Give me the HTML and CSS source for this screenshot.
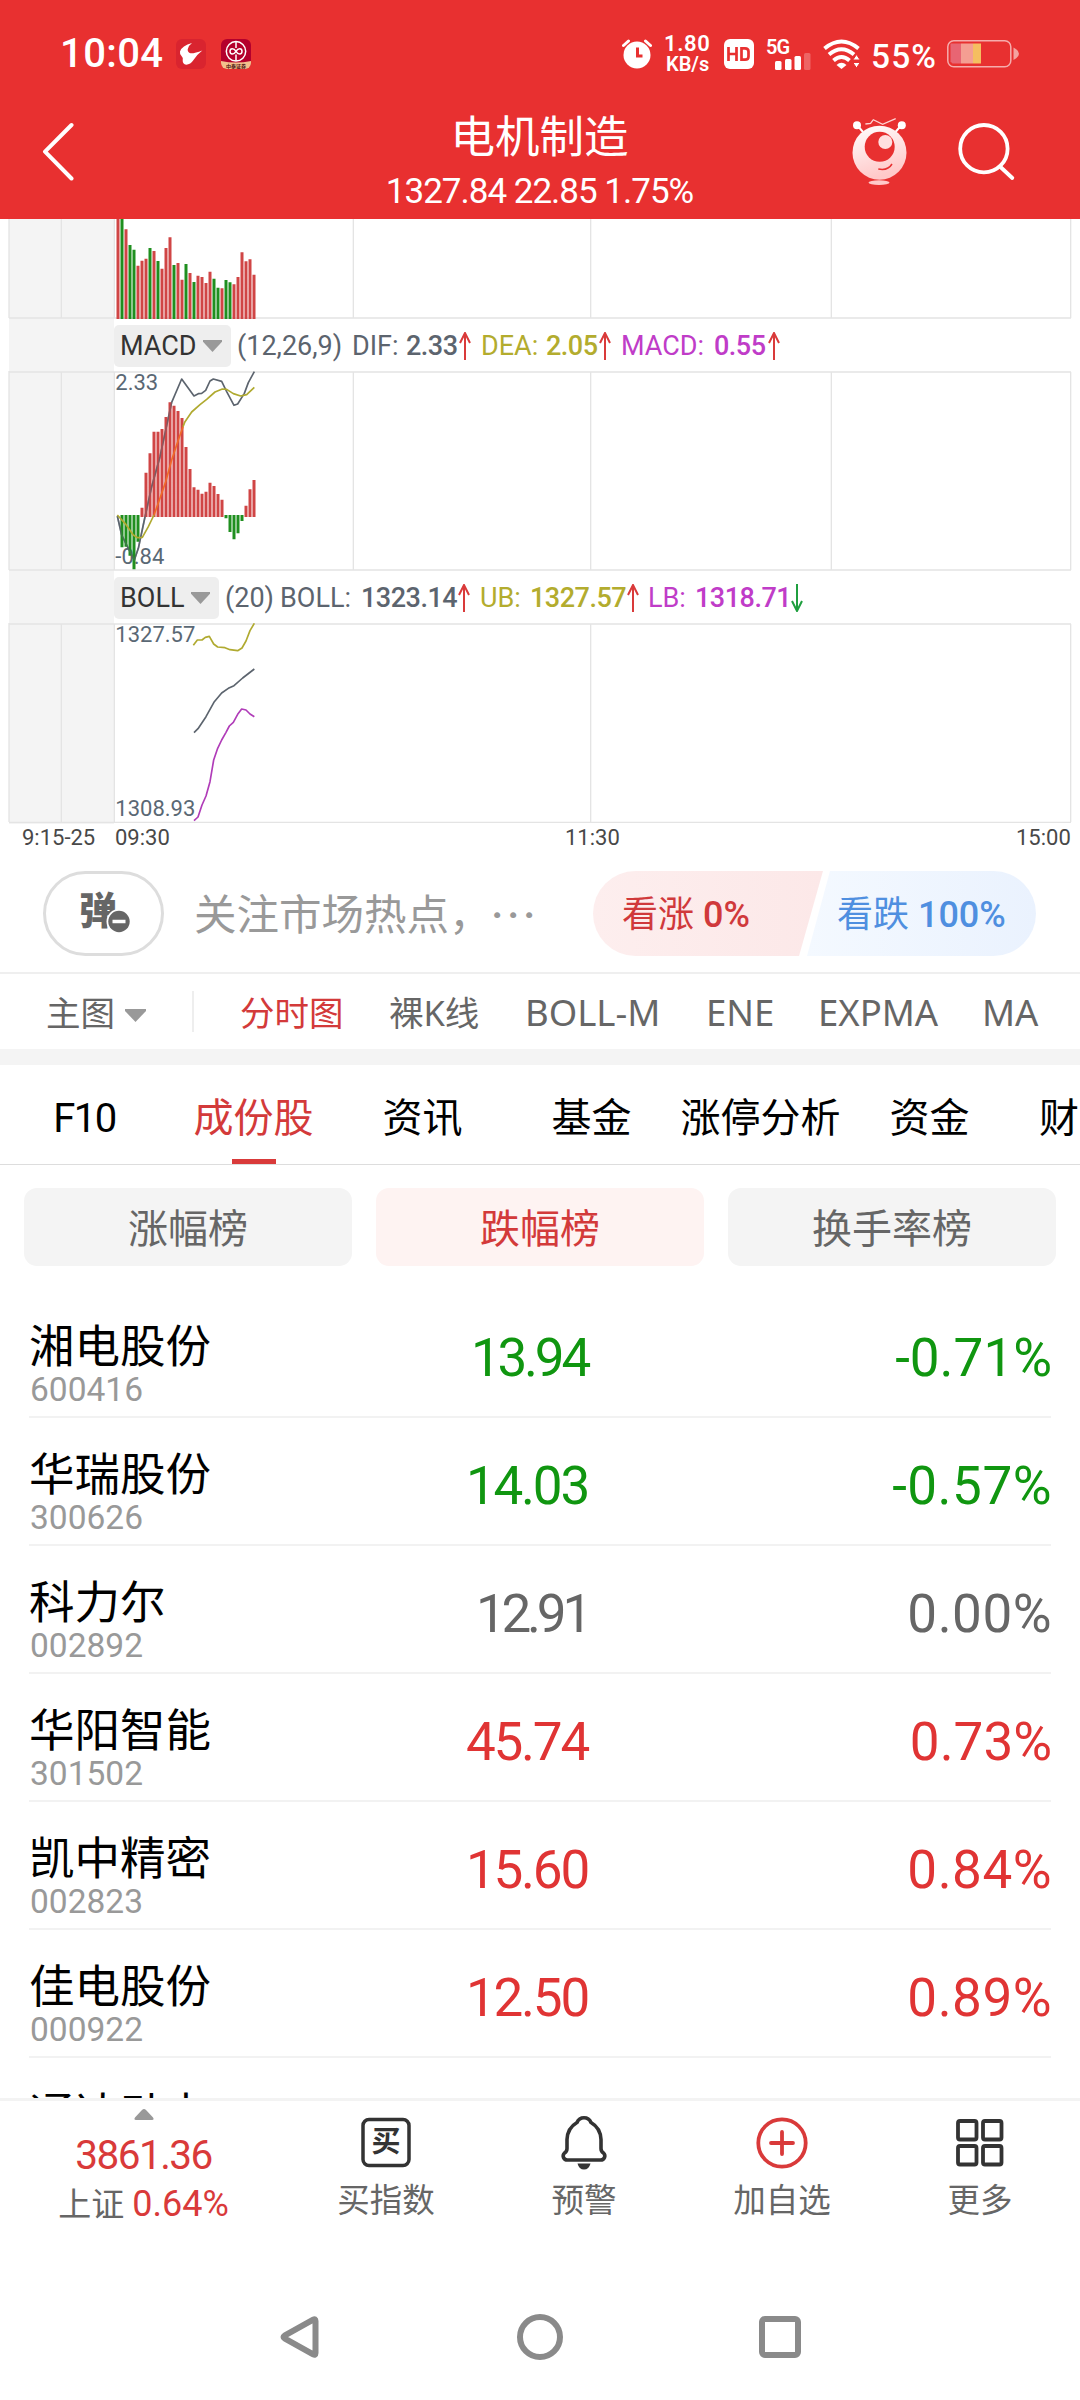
FILE: index.html
```html
<!DOCTYPE html>
<html lang="zh-CN">
<head>
<meta charset="utf-8">
<title>电机制造</title>
<link rel="stylesheet" href="styles.css">
</head>
<body>
<div class="screen">
  <header class="header">
    <div class="status">
      <span class="clock">10:04</span>
      <svg class="app-a" width="30" height="30" viewBox="0 0 30 30"><rect width="30" height="30" rx="6" fill="#d9242f"/><path d="M16 4Q6 6.500 4 12.500q-.5 2.500 1.500 4.500 2 1.500 1.200 4.500-.2 3.500 3.500 4.200 4.300-.2 7.300-4.700Q21 15.500 26.300 11.500 19 14.500 14.500 14.300q-3-1-2.800-4Q12.500 6.500 16 4z" fill="#fff"/></svg>
      <svg class="app-b" width="30" height="30" viewBox="0 0 30 30"><defs><clipPath id="rc"><rect width="30" height="30" rx="6"/></clipPath></defs><g clip-path="url(#rc)"><rect width="30" height="30" fill="#b4002c"/><path d="M0 22q15 3 30 0v8H0z" fill="#f3c08c"/></g><g fill="none" stroke="#fff" stroke-width="1.500"><circle cx="15" cy="12.300" r="9.700"/><path d="M15 2.500v6.500M15 15.500v6.500M15 12.300c-2-3.500-6-3.500-6 0s4 3.500 6 0 6-3.500 6 0-4 3.500-6 0"/></g><text x="15" y="28.700" font-size="5" font-weight="700" text-anchor="middle" fill="#4a1010">中泰证券</text></svg>
      <svg class="alarm" width="30" height="30" viewBox="0 0 30 30"><circle cx="15" cy="16" r="13.500" fill="#fff"/><path d="M15.500 8.500v8.500h5" fill="none" stroke="#e83030" stroke-width="3"/><path d="M1.500 6.500l5-4.500M28.500 6.500l-5-4.500" stroke="#fff" stroke-width="3" stroke-linecap="round"/></svg>
      <span class="speed"><b>1.80</b><b class="unit">KB/s</b></span>
      <svg class="hd" width="30" height="30" viewBox="0 0 30 30"><rect width="30" height="30" rx="6" fill="#fff"/><path d="M4.500 8v14M12.500 8v14M4.500 15h8M17.500 9.300v11.400h3.500q3.500 0 3.500-3.200v-5q0-3.200-3.500-3.200z" fill="none" stroke="#e83030" stroke-width="2.700"/></svg>
      <span class="signal"><b>5G</b><svg width="36" height="18" viewBox="0 0 36 18" fill="#fff"><rect y="9" width="6.500" height="9" rx="1.500"/><rect x="10" y="7" width="6.500" height="11" rx="1.500"/><rect x="19.500" y="4" width="6.500" height="14" rx="1.500"/><rect x="29" y="1" width="6.500" height="17" rx="1.500" opacity=".25"/></svg></span>
      <svg class="wifi" width="38" height="30" viewBox="0 0 38 30"><g fill="none" stroke="#fff" stroke-width="4"><path d="M1.500 9.500Q18.500-4.500 35.500 9.500"/><path d="M6 15.500Q18.500 5 31 15.500"/><path d="M10.500 21.500Q18.500 14.500 26.500 21.500"/></g><path d="M13.500 26Q18.500 21.500 23.500 26L18.500 30z" fill="#fff"/><path d="M33.500 15.500l3.700 5.500h-7.400zM33.500 29l3.700-5.500h-7.400z" fill="#fff" stroke="#e83030" stroke-width="1"/></svg>
      <span class="charge">55%</span>
      <svg class="battery" width="73" height="28" viewBox="0 0 73 28"><rect x=".8" y=".8" width="63" height="26" rx="6" fill="none" stroke="#fff" stroke-opacity=".6" stroke-width="1.500"/><path d="M3.500 3.500h10.500v20H5.500l-2-2z" fill="#e86573"/><path d="M14 3.500h12v20H14z" fill="#f49e92"/><path d="M26 3.500h8v20h-8z" fill="#f5be60"/><path d="M66.500 7.500q5.500 3 5.500 6.300t-5.500 6.200z" fill="#f4a3a0"/></svg>
    </div>
    <div class="title-bar">
      <svg class="back" width="34" height="60" viewBox="0 0 34 60"><path d="M30.500 4L4 30.600l26.500 26.900" fill="none" stroke="#fff" stroke-width="4" stroke-linecap="round" stroke-linejoin="round"/></svg>
      <div class="titles">
        <h1>电机制造</h1>
        <p>1327.84 22.85 1.75%</p>
      </div>
      <svg class="robot" width="60" height="70" viewBox="850 117 60 70"><defs><linearGradient id="rg" x1="0" y1="0" x2=".3" y2="1"><stop offset="0" stop-color="#fff"/><stop offset="1" stop-color="#ffc9c9"/></linearGradient></defs><path d="M857 125l6 7M901.500 125l-6 7" stroke="#fff" stroke-width="2"/><circle cx="857" cy="125.300" r="4" fill="#fff"/><circle cx="901.800" cy="125.300" r="4" fill="#fff"/><path d="M865.400 124l5.200-.7 2.700-3.600 9.300 4.600 13.100-5.600" fill="none" stroke="#ffd4d4" stroke-width="1.300"/><circle cx="879.500" cy="152.700" r="27" fill="url(#rg)"/><circle cx="879.700" cy="146.800" r="15" fill="#e83030"/><circle cx="885.300" cy="142" r="7" fill="#ffe0e0"/><path d="M878.300 169q9.500 2 13.700-5" fill="none" stroke="#e83030" stroke-width="1.500"/><ellipse cx="879" cy="182.600" rx="10.500" ry="2.300" fill="#ffc9c9"/></svg>
      <svg class="search" width="60" height="60" viewBox="957 121 60 60"><g fill="none" stroke="#fff" stroke-width="3.800" stroke-linecap="round"><circle cx="983.900" cy="148.700" r="23.700"/><path d="M1000.500 167l11.800 11"/></g></svg>
    </div>
  </header>

  <section class="charts">
    <svg class="plot" width="1080" height="100" viewBox="0 27 3240 300">
      <path class="shade" d="M27 27h315v300H27z"/>
      <path class="grid" d="M27 27v297M184 27v297M343 27v297M1060 27v297M1772 27v297M2494 27v297M3212 27v297M27 324h3186"/>
      <path class="bar-up" d="M354 327V27M378 327V58M414 327V167M426 327V152M438 327V146M462 327V123M486 327V176M498 327V114M510 327V82M534 327V159M546 327V209M570 327V189M594 327V197M606 327V201M618 327V219M630 327V185M666 327V235M702 327V223M714 327V201M726 327V127M738 327V154M750 327V148M762 327V194"/>
      <path class="bar-down" d="M366 327V27M390 327V105M402 327V119M450 327V114M474 327V153M522 327V165M558 327V162M582 327V216M642 327V206M654 327V233M678 327V210M690 327V217"/>
    </svg>
    <div class="legend legend-macd">
      <span class="chip">MACD<i class="caret"></i></span>
      <span>(12,26,9)</span><span>DIF:</span><span class="value">2.33</span>
      <svg class="arrow" viewBox="0 0 12 28"><path d="M6 28V2M1 11L6 1l5 10"/></svg>
      <span class="olive">DEA:</span><span class="olive value">2.05</span>
      <svg class="arrow" viewBox="0 0 12 28"><path d="M6 28V2M1 11L6 1l5 10"/></svg>
      <span class="violet">MACD:</span><span class="violet value">0.55</span>
      <svg class="arrow" viewBox="0 0 12 28"><path d="M6 28V2M1 11L6 1l5 10"/></svg>
    </div>
    <svg class="plot" width="1080" height="200" viewBox="0 483 3240 600">
      <path class="shade" d="M27 483h315v600H27z"/>
      <path class="grid" d="M27 483v597M184 486v594M343 486v594M1060 486v594M1772 486v594M2494 486v594M3212 486v594M27 486h3186M27 1080h3186"/>
      <text x="346" y="540">2.33</text><text x="346" y="1061">-0.84</text>
      <path class="line slate" d="M352 918L365 975L385 1015L403 1050L415 1015L433 930L455 830L480 740L515 577L545 507L582 558L595 551L605 550L617 541L630 513L640 507L665 514L680 545L702 586L713 582L733 550L745 518L763 485"/>
      <path class="bar-up" d="M426 921V893M438 921V788M450 921V730M462 921V665M474 921V665M486 921V657M498 921V621M510 921V577M522 921V587M534 921V603M546 921V624M558 921V711M570 921V777M582 921V832M594 921V839M606 921V851M618 921V845M630 921V818M642 921V828M654 921V852M666 921V869M738 921V887M750 921V838M762 921V810"/>
      <path class="bar-down" d="M366 915V1012M378 915V1010M390 915V1037M402 915V1078M414 915V995M678 915V925M690 915V966M702 915V988M714 915V970M726 915V933"/>
      <path class="line slate faint" d="M352 918L365 975L385 1015L403 1050L415 1015L433 930L455 830L480 740L515 577"/>
      <path class="line gold" d="M352 915L375 940L400 975L413 983L427 982L445 950L462 915"/>
      <path class="line amber" d="M462 915L480 865L497 815L515 750L535 690L549 650"/>
      <path class="line gold" d="M549 650L555 635L575 606L600 584L620 568L645 546L667 537L680 538L700 551L722 558L740 554L763 532"/>
    </svg>
    <div class="legend legend-boll">
      <span class="chip">BOLL<i class="caret"></i></span>
      <span>(20)</span><span>BOLL:</span><span class="value">1323.14</span>
      <svg class="arrow" viewBox="0 0 12 28"><path d="M6 28V2M1 11L6 1l5 10"/></svg>
      <span class="olive">UB:</span><span class="olive value">1327.57</span>
      <svg class="arrow" viewBox="0 0 12 28"><path d="M6 28V2M1 11L6 1l5 10"/></svg>
      <span class="violet">LB:</span><span class="violet value">1318.71</span>
      <svg class="arrow fall" viewBox="0 0 12 28"><path d="M6 0v26M1 17l5 10 5-10"/></svg>
    </div>
    <svg class="plot" width="1080" height="201" viewBox="0 189 3240 603">
      <path class="shade" d="M27 189h315v603H27z"/>
      <path class="grid" d="M27 189v597M184 192v594M343 192v594M1772 192v594M3212 192v594M27 192h3186M27 787h3186"/>
      <text x="346" y="246">1327.57</text><text x="346" y="768">1308.93</text>
      <path class="line gold" d="M580 256L592 240L606 240L616 232L628 229L641 252L653 261L675 263L690 269L713 272L726 264L738 243L750 212L763 190"/>
      <path class="line slate" d="M582 518L594 506L606 488L618 470L643 425L665 399L685 385L702 377L728 354L763 327"/>
      <path class="line purple" d="M582 782L594 771L606 735L618 708L630 665L641 600L653 565L665 540L678 517L688 498L700 487L713 463L725 447L738 450L750 462L763 470"/>
    </svg>
    <div class="axis"><span>9:15-25</span><span>09:30</span><span>11:30</span><span>15:00</span></div>
  </section>

  <section class="comment">
    <div class="danmu"><svg width="52" height="46" viewBox="0 0 52 46"><text x="0" y="34" class="danmu-text">弹</text><circle cx="40" cy="31.500" r="12.500" fill="#fff"/><circle cx="40" cy="31.500" r="10.700" fill="#666"/><path d="M33.500 31.500h13" stroke="#fff" stroke-width="3.500"/></svg></div>
    <div class="hint">关注市场热点，<span>···</span></div>
    <div class="vote">
      <div class="bull">看涨 <em>0%</em></div>
      <div class="bear">看跌 <em>100%</em></div>
    </div>
  </section>

  <nav class="views">
    <span class="main-view">主图<i class="caret"></i></span>
    <span class="active">分时图</span><span>裸K线</span><span class="latin">BOLL-M</span><span class="latin">ENE</span><span class="latin">EXPMA</span><span class="latin">MA</span>
  </nav>

  <nav class="tabs">
    <span class="f10">F10</span><span class="active">成份股</span><span>资讯</span><span>基金</span><span>涨停分析</span><span>资金</span><span class="cut">财</span>
  </nav>

  <div class="ranks"><span>涨幅榜</span><span class="active">跌幅榜</span><span>换手率榜</span></div>

  <section class="stocks">
    <div class="stock down"><div><h2>湘电股份</h2><small>600416</small></div><b class="tight">13.94</b><strong>-0.71%</strong></div>
    <div class="stock down"><div><h2>华瑞股份</h2><small>300626</small></div><b>14.03</b><strong class="wide">-0.57%</strong></div>
    <div class="stock flat"><div><h2>科力尔</h2><small>002892</small></div><b class="tighter">12.91</b><strong class="wide">0.00%</strong></div>
    <div class="stock up"><div><h2>华阳智能</h2><small>301502</small></div><b>45.74</b><strong>0.73%</strong></div>
    <div class="stock up"><div><h2>凯中精密</h2><small>002823</small></div><b>15.60</b><strong class="wide">0.84%</strong></div>
    <div class="stock up"><div><h2>佳电股份</h2><small>000922</small></div><b>12.50</b><strong class="wide">0.89%</strong></div>
    <div class="stock"><div><h2>通达动力</h2></div></div>
  </section>

  <footer class="actions">
    <div class="index">
      <svg width="20" height="12" viewBox="0 0 20 12"><path d="M10 0q1 0 2 1l7 7.500q1.500 2.500-1 2.500H2q-2.500 0-1-2.500L8 1q1-1 2-1z" fill="#999"/></svg>
      <b>3861.36</b>
      <p>上证<em>0.64%</em></p>
    </div>
    <div class="action"><svg width="54" height="54" viewBox="0 0 54 54"><rect x="4" y="4.500" width="46" height="46" rx="6" fill="none" stroke="#333" stroke-width="3.500"/><text x="27" y="37" text-anchor="middle" class="buy">买</text></svg>买指数</div>
    <div class="action"><svg width="54" height="54" viewBox="0 0 54 54"><path d="M27 2.700q5 0 7 4.800 9.500 5.500 10 17v9q0 3 2.500 4.500 2 2 1 4.500-1 2.500-4 2.500h-33q-3 0-4-2.500-1-2.500 1-4.500 2.500-1.500 2.500-4.500v-9q.5-11.500 10-17 2-4.800 7-4.800z" fill="none" stroke="#333" stroke-width="3.600"/><path d="M20.500 48.500h13q-1.500 6-6.500 6t-6.500-6z" fill="#333"/></svg>预警</div>
    <div class="action"><svg width="54" height="54" viewBox="0 0 54 54"><g fill="none" stroke="#d93a3a" stroke-width="3.800" stroke-linecap="round"><circle cx="27" cy="28" r="23.700"/><path d="M27 17v22M16 28h22"/></g></svg>加自选</div>
    <div class="action"><svg width="54" height="54" viewBox="0 0 54 54"><g fill="none" stroke="#333" stroke-width="3.800"><rect x="5" y="6" width="18.500" height="18.500" rx="2"/><rect x="30" y="6" width="18.500" height="18.500" rx="2"/><rect x="5" y="31" width="18.500" height="18.500" rx="2"/><rect x="30" y="31" width="18.500" height="18.500" rx="2"/></g></svg>更多</div>
  </footer>

  <div class="system-nav">
    <svg width="48" height="48" viewBox="0 0 48 48"><path d="M39.500 8v32q0 2.500-2.300 1.300L8.500 25.300q-2-1.300 0-2.600L37.200 6.700q2.300-1.200 2.300 1.300z"/></svg>
    <svg width="48" height="48" viewBox="0 0 48 48"><circle cx="24" cy="24" r="20"/></svg>
    <svg width="48" height="48" viewBox="0 0 48 48"><rect x="6" y="6" width="36" height="36" rx="3"/></svg>
  </div>
</div>
</body>
</html>
```
FILE: styles.css
```css
* { box-sizing: border-box; margin: 0; padding: 0; }
body { background: #fff; }
svg { display: block; }
em, i { font-style: normal; }
.screen {
  width: 1080px; height: 2400px; overflow: hidden;
  display: flex; flex-direction: column;
  font-family: Roboto, "Noto Sans CJK SC", sans-serif;
  background: #fff;
}

/* header */
.header { height: 219px; flex: none; background: #e83030; color: #fff; }
.status { height: 108px; display: flex; align-items: center; }
.clock { margin-left: 60px; width: 116px; font-size: 40px; font-weight: 500; line-height: 60px; letter-spacing: .4px; }
.app-b { margin-left: 15px; }
.alarm { margin-left: 371px; }
.speed { width: 60px; margin-left: 12px; display: flex; flex-direction: column; font-size: 22px; line-height: 20px; text-align: left; padding-top: 0; }
.speed b { font-weight: 600; letter-spacing: .6px; }
.speed .unit { font-size: 20px; padding-left: 2px; letter-spacing: 0; }
.signal { width: 46px; height: 32px; margin-left: 12px; display: grid; }
.signal b { grid-area: 1 / 1; font-size: 20px; line-height: 18px; font-weight: 600; letter-spacing: -1px; }
.signal svg { grid-area: 1 / 1; align-self: end; margin-left: 9px; }
.wifi { margin-left: 11px; }
.charge { width: 76px; margin-left: 10px; padding-top: 5px; font-size: 33.500px; font-weight: 500; letter-spacing: 1.100px; }
.title-bar { display: flex; padding: 5px 0 0 41px; }
.back { margin-top: 8px; }
.titles { width: 776px; padding: 0 82px 0 235px; text-align: center; white-space: nowrap; }
.titles h1 { font-size: 44.500px; font-weight: 400; line-height: 46px; margin-top: 2px; }
.titles p { font-size: 35px; line-height: 40px; margin-top: 11px; letter-spacing: -1px; }
.robot { margin-top: 4px; margin-left: -1px; }
.search { margin-left: 47px; margin-top: 8px; }

/* charts */
.charts { flex: none; }
.plot text { font-size: 66px; fill: #5a6874; }
.shade { fill: #f4f4f4; }
.grid { stroke: #e4e4e4; stroke-width: 4; fill: none; }
.bar-up { stroke: #d04545; stroke-width: 9; }
.bar-down { stroke: #1f8f1f; stroke-width: 9; }
.line { fill: none; stroke-width: 5; stroke-linejoin: round; }
.slate { stroke: #5c646e; }
.faint { stroke-opacity: .45; }
.gold { stroke: #b0aa30; }
.amber { stroke: #f06a28; }
.purple { stroke: #b03cb8; }
.legend {
  height: 52px; display: grid; align-items: center; white-space: nowrap;
  font-size: 27px; color: #5c646e;
  background: linear-gradient(#f4f4f4, #f4f4f4) 9px 0 / 105px 52px no-repeat;
  padding: 2px 0 0 114px;
}
.legend-macd { grid-template-columns: 123px 115px 54px 53px 22px 65px 53px 22px 93px 54px 12px; }
.legend-boll { grid-template-columns: 111px 55px 81px 97px 22px 50px 97px 21px 47px 96px 12px; }
.chip { display: flex; align-items: center; justify-content: space-between; width: 117px; height: 42px; padding: 0 9px 0 6px; background: #eee; border-radius: 5px; color: #333; }
.legend-boll .chip { width: 105px; }
.caret { width: 19px; height: 12px; background: #999; clip-path: polygon(0 0, 100% 0, 100% 15%, 50% 100%, 0 15%); }
.value { font-weight: 500; letter-spacing: -.5px; }
.olive { color: #b3ac2e; }
.violet { color: #c03cc8; }
.arrow { width: 12px; height: 28px; fill: none; stroke: #d93a3a; stroke-width: 2; }
.fall { stroke: #1f9f3f; }
.axis { height: 31px; display: grid; grid-template-columns: 93px 450px 451px 1fr; padding-left: 22px; font-size: 22px; line-height: 27px; color: #484848; }

/* comment bar */
.comment { flex: none; height: 119px; display: flex; align-items: flex-start; padding: 16px 0 0 43px; border-bottom: 2px solid #efefef; }
.danmu { width: 121px; height: 85px; border: 3px solid #ddd; border-radius: 43px; padding: 16px 0 0 33px; }
.danmu-text { font-size: 38px; font-weight: 900; fill: #666; }
.hint { width: 399px; margin-left: 30px; font-size: 42.500px; line-height: 89px; color: #999; display: flex; }
.hint span { font-size: 38px; letter-spacing: 4.500px; font-weight: 700; }
.vote { width: 443px; height: 85px; display: flex; border-radius: 43px; overflow: hidden; font-size: 36px; line-height: 89px; white-space: nowrap; }
.vote em { font-weight: 500; }
.bull { width: 230px; padding-left: 29px; color: #d0393b; background: linear-gradient(90deg, #fdeeee, #fce8e8); clip-path: polygon(0 0, 100% 0, 206px 100%, 0 100%); }
.bear { width: 229px; margin-left: -16px; padding-left: 30px; color: #4f8fe0; background: linear-gradient(90deg, #f4f9ff, #eaf2fe); clip-path: polygon(23px 0, 100% 0, 100% 100%, 0 100%); }

/* chart views */
.views { flex: none; height: 91px; padding-left: 46px; display: grid; grid-template-columns: 194px 149px 135px 181px 112px 164px 1fr; border-bottom: 16px solid #f4f4f4; font-family: "Noto Sans", "Noto Sans CJK SC", sans-serif; font-size: 34.500px; line-height: 77px; color: #666; white-space: nowrap; }
.views .latin { font-size: 36.500px; padding-left: 1px; }
.main-view { display: flex; align-items: center; background: linear-gradient(#eee, #eee) 146px 17px / 2px 41px no-repeat; }
.main-view .caret { width: 21px; height: 13px; margin: 6px 0 0 10px; }
.views .active, .tabs .active, .ranks .active { color: #d33a3a; }

/* section tabs */
.tabs { flex: none; height: 100px; display: flex; overflow: hidden; border-bottom: 1px solid #ddd; font-size: 40px; line-height: 107px; color: #000; }
.tabs span { flex: none; width: 169px; height: 99px; text-align: center; white-space: nowrap; }
.tabs .f10 { letter-spacing: -1.500px; }
.tabs .active { background: linear-gradient(#d93a3a, #d93a3a) center bottom / 44px 5px no-repeat; }
.tabs .cut { text-align: left; padding-left: 25px; }

/* ranking switch */
.ranks { flex: none; display: grid; grid-template-columns: repeat(3, 328px); gap: 24px; padding: 23px 24px 24px; font-size: 40px; line-height: 84px; text-align: center; color: #666; }
.ranks span { height: 78px; border-radius: 13px; background: #f4f4f4; }
.ranks .active { background: #fef3f2; }

/* stock list */
.stocks { flex: none; height: 808px; overflow: hidden; padding: 0 29px; }
.stock { height: 128px; display: grid; grid-template-columns: 300px 259px 1fr; align-items: start; border-bottom: 2px solid #f2f2f2; }
.stock h2 { margin-top: 33px; font-size: 45.500px; line-height: 50px; font-weight: 400; color: #000; }
.stock small { display: block; margin-top: -1px; padding-left: 1px; font-size: 33.500px; line-height: 36px; color: #999; }
.stock b, .stock strong { font-size: 53px; font-weight: 400; line-height: 60px; margin-top: 38px; text-align: right; }
.stock b { letter-spacing: -2.200px; }
.stock .tight { letter-spacing: -3.200px; }
.stock .tighter { letter-spacing: -4.200px; }
.stock .wide { letter-spacing: .5px; }
.stock strong { margin-right: -1px; }
.down { color: #109610; }
.flat { color: #666; }
.up { color: #e03434; }

/* bottom actions */
.actions { flex: none; height: 150px; display: grid; grid-template-columns: 287px repeat(4, 198px); border-top: 3px solid #f3f3f3; font-size: 32.500px; line-height: 40px; color: #666; text-align: center; }
.index { padding-top: 8px; display: flex; flex-direction: column; align-items: center; }
.index b { font-size: 40.500px; font-weight: 400; line-height: 48px; margin-top: 10px; letter-spacing: -1.500px; color: #d93a3a; }
.index p { margin-top: 3px; line-height: 44px; white-space: nowrap; font-size: 33px; }
.index em { margin-left: 8px; font-size: 36px; color: #d93a3a; }
.action { display: flex; flex-direction: column; align-items: center; padding-top: 14px; }
.action svg { margin-bottom: 12px; overflow: visible; }
.buy { font-size: 29px; font-weight: 700; fill: #333; }

/* system navigation */
.system-nav { flex: 1; display: flex; justify-content: center; gap: 192px; padding-top: 65px; }
.system-nav svg { fill: none; stroke: #8a8a8a; stroke-width: 6; stroke-linejoin: round; }
```
